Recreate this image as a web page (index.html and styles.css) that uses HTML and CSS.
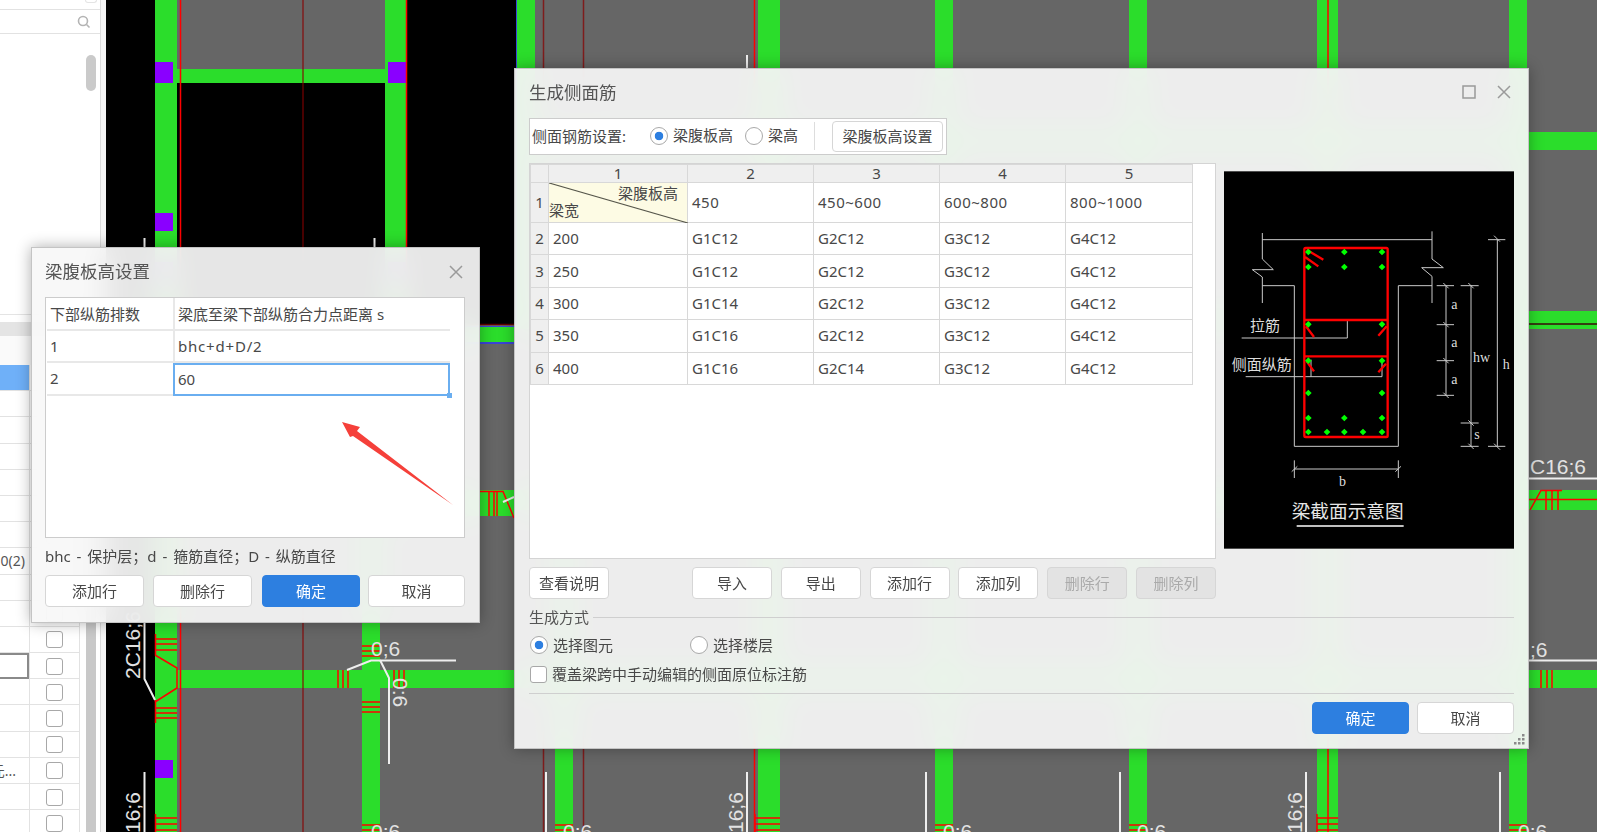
FILE: index.html
```html
<!DOCTYPE html>
<html lang="zh-CN">
<head>
<meta charset="utf-8">
<title>生成侧面筋</title>
<link rel="stylesheet" href="styles.css">
</head>
<body>
<div class="desktop">

  <svg class="cad" width="1597" height="832" viewBox="0 0 1597 832">
    <rect class="gray" x="0" y="0" width="1597" height="832"/>
    <rect class="black" x="106" y="0" width="49" height="832"/>
    <rect class="black" x="177" y="83" width="208" height="242"/>
    <rect class="black" x="406" y="0" width="110" height="325"/>

    <rect class="green" x="155" y="0" width="22" height="832"/>
    <rect class="green" x="385" y="0" width="21" height="325"/>
    <rect class="green" x="177" y="69" width="208" height="14"/>
    <rect class="green" x="362" y="325" width="18" height="507"/>
    <rect class="green" x="517" y="0" width="18" height="325"/>
    <rect class="green" x="555" y="325" width="18" height="507"/>
    <rect class="green" x="758" y="0" width="22" height="832"/>
    <rect class="green" x="935" y="0" width="18" height="832"/>
    <rect class="green" x="1129" y="0" width="18" height="832"/>
    <rect class="green" x="1317" y="0" width="21" height="832"/>
    <rect class="green" x="1509" y="0" width="18" height="832"/>
    <rect class="green" x="516" y="132" width="1081" height="18"/>
    <rect class="green" x="177" y="327" width="339" height="15"/>
    <rect class="green" x="516" y="311" width="1081" height="18"/>
    <rect class="green" x="380" y="490" width="136" height="26"/>
    <rect class="green" x="516" y="490" width="1081" height="20"/>
    <rect class="green" x="177" y="670" width="1420" height="18"/>

    <rect class="blue" x="177" y="326" width="339" height="1"/>
    <rect class="blue" x="177" y="342" width="339" height="2"/>
    <rect class="blue" x="516" y="0" width="1" height="325"/>

    <rect class="purple" x="155" y="62" width="18" height="21"/>
    <rect class="purple" x="388" y="62" width="18" height="21"/>
    <rect class="purple" x="155" y="213" width="18" height="18"/>
    <rect class="purple" x="155" y="262" width="18" height="18"/>
    <rect class="purple" x="388" y="262" width="18" height="18"/>
    <rect class="purple" x="155" y="760" width="18" height="18"/>

    <g class="dark-red">
      <line x1="303" y1="0" x2="303" y2="832"/>
      <line x1="543.500" y1="0" x2="543.500" y2="832"/>
      <line x1="583.500" y1="0" x2="583.500" y2="832"/>
      <line x1="177" y1="324.500" x2="516" y2="324.500"/>
      <line class="dark-line" x1="1529" y1="324" x2="1597" y2="324"/>
    </g>
    <g class="red">
      <line x1="180.500" y1="0" x2="180.500" y2="832"/>
      <line x1="406.500" y1="0" x2="406.500" y2="325"/>
      <line x1="754.500" y1="0" x2="754.500" y2="832"/>
      <line x1="1328" y1="0" x2="1328" y2="832"/>
      <path d="M155.500 634V655M155 639H177M155 644H177M155 650H177"/>
      <path d="M155 655L177 668V688L155 702"/>
      <path d="M155.500 700V723M155 708H177M155 713H177M155 718H177"/>
      <path d="M155.500 814V832M155 818H177M155 824H177M155 830H177"/>
      <path d="M338 670V688M343 670V688M348 670V688"/>
      <path d="M394 670V688M399 670V688M404 670V688"/>
      <path d="M362 646H380M362 651H380M362 656H380"/>
      <path d="M362 702H380M362 707H380M362 712H380"/>
      <path d="M362 825H380M362 830H380"/>
      <path d="M555 825H573M555 830H573M935 825H953M935 830H953M1129 825H1147M1129 830H1147M1509 825H1527M1509 830H1527"/>
      <path d="M755 814V832M755 818H780M755 824H780M755 830H780"/>
      <path d="M1317 814V832M1317 818H1338M1317 824H1338M1317 830H1338"/>
      <path d="M480 491.500H503L514 518M489 491V516M494 491V516M497 491V516"/>
      <path d="M1530 510L1541 490.500H1562M1546 490V510M1552 490V510M1558 490V510M1529 499.500H1597"/>
      <path d="M1541 670V688M1547 670V688M1552 670V688"/>
    </g>
    <g class="leader">
      <line x1="144.500" y1="238" x2="144.500" y2="248"/>
      <line x1="374.500" y1="238" x2="374.500" y2="248"/>
      <line x1="747" y1="55" x2="747" y2="68"/>
      <path d="M144.500 622V679L155 700"/>
      <path d="M144.500 772V832"/>
      <path d="M347 670L371 660.500H456"/>
      <path d="M380 660L389 678V764"/>
      <path d="M546 772V832M747 772V832M926 772V832M1120 772V832M1306 772V832M1500 772V832"/>
      <path d="M1529 478.500H1597M1529 660.500H1597"/>
      <path d="M503 502L514 497"/>
    </g>
    <g class="cad-text">
      <text x="371" y="656">0;6</text>
      <text x="371" y="839">0:6</text>
      <text x="563" y="839">0:6</text>
      <text x="943" y="839">0:6</text>
      <text x="1137" y="839">0:6</text>
      <text x="1518" y="839">0:6</text>
      <text x="1530" y="474">C16;6</text>
      <text x="1530" y="657">;6</text>
      <text transform="translate(140 679) rotate(-90)">2C16;6</text>
      <text transform="translate(140 833) rotate(-90)">16;6</text>
      <text transform="translate(743 833) rotate(-90)">16;6</text>
      <text transform="translate(1302 833) rotate(-90)">16;6</text>
      <text transform="translate(541 872) rotate(-90)">16;6</text>
      <text transform="translate(921 872) rotate(-90)">16;6</text>
      <text transform="translate(1115 872) rotate(-90)">16;6</text>
      <text transform="translate(393 678) rotate(90)">0:6</text>
    </g>
  </svg>

  <aside class="sidebar">
    <div class="side-top"><span class="side-top-box"></span></div>
    <div class="side-search">
      <svg class="search-icon" width="14" height="14" viewBox="0 0 14 14">
        <circle cx="6" cy="6" r="4.500"/>
        <line x1="9.500" y1="9.500" x2="12.500" y2="12.500"/>
      </svg>
    </div>
    <div class="side-tree"><div class="thumb"></div></div>
    <div class="side-head"></div>
    <div class="side-headrow"></div>
    <div class="side-body">
      <div class="rows">
        <div class="cell cell-active"></div><div class="cell cell-check"><span class="box"></span></div>
        <div class="cell"></div><div class="cell cell-check"><span class="box"></span></div>
        <div class="cell"></div><div class="cell cell-check"><span class="box"></span></div>
        <div class="cell"></div><div class="cell cell-check"><span class="box"></span></div>
        <div class="cell"></div><div class="cell cell-check"><span class="box"></span></div>
        <div class="cell"></div><div class="cell cell-check"><span class="box"></span></div>
        <div class="cell"></div><div class="cell cell-check"><span class="box"></span></div>
        <div class="cell"><span>0(2)</span></div><div class="cell cell-check"><span class="box"></span></div>
        <div class="cell"></div><div class="cell cell-check"><span class="box"></span></div>
        <div class="cell"></div><div class="cell cell-check"><span class="box"></span></div>
        <div class="cell"></div><div class="cell cell-check"><span class="box"></span></div>
        <div class="cell cell-outlined"></div><div class="cell cell-check"><span class="box"></span></div>
        <div class="cell"></div><div class="cell cell-check"><span class="box"></span></div>
        <div class="cell"></div><div class="cell cell-check"><span class="box"></span></div>
        <div class="cell"></div><div class="cell cell-check"><span class="box"></span></div>
        <div class="cell cell-more"><span>元...</span></div><div class="cell cell-check"><span class="box"></span></div>
        <div class="cell"></div><div class="cell cell-check"><span class="box"></span></div>
        <div class="cell"></div><div class="cell cell-check"><span class="box"></span></div>
      </div>
      <div class="track"></div>
    </div>
  </aside>

  <section class="dialog dialog-main">
    <header class="dialog-head">
      <h1 class="dialog-title">生成侧面筋</h1>
      <svg class="win-icon win-max" width="14" height="14" viewBox="0 0 14 14"><rect x="1" y="1" width="12" height="12"/></svg>
      <svg class="win-icon win-close" width="14" height="14" viewBox="0 0 14 14"><path d="M1 1L13 13M13 1L1 13"/></svg>
    </header>

    <div class="toolbar">
      <span class="toolbar-label">侧面钢筋设置:</span>
      <label class="radio-item radio-a"><span class="radio radio-on"></span>梁腹板高</label>
      <label class="radio-item radio-b"><span class="radio"></span>梁高</label>
      <span class="toolbar-sep"></span>
      <button class="btn btn-setting">梁腹板高设置</button>
    </div>

    <div class="main-body">
      <div class="sheet">
        <table class="grid">
          <colgroup><col class="c0"><col class="c1"><col class="c2"><col class="c3"><col class="c4"><col class="c5"></colgroup>
          <tr class="row-head"><th></th><th>1</th><th>2</th><th>3</th><th>4</th><th>5</th></tr>
          <tr class="row-first">
            <th>1</th>
            <td class="diag">
              <svg class="diag-line" width="139" height="40" viewBox="0 0 139 40"><line x1="0" y1="0" x2="139" y2="40"/></svg>
              <span class="diag-top">梁腹板高</span><span class="diag-bottom">梁宽</span>
            </td>
            <td>450</td><td>450~600</td><td>600~800</td><td>800~1000</td>
          </tr>
          <tr><th>2</th><td>200</td><td>G1C12</td><td>G2C12</td><td>G3C12</td><td>G4C12</td></tr>
          <tr><th>3</th><td>250</td><td>G1C12</td><td>G2C12</td><td>G3C12</td><td>G4C12</td></tr>
          <tr><th>4</th><td>300</td><td>G1C14</td><td>G2C12</td><td>G3C12</td><td>G4C12</td></tr>
          <tr><th>5</th><td>350</td><td>G1C16</td><td>G2C12</td><td>G3C12</td><td>G4C12</td></tr>
          <tr><th>6</th><td>400</td><td>G1C16</td><td>G2C14</td><td>G3C12</td><td>G4C12</td></tr>
        </table>
      </div>

      <svg class="section-pic" width="290" height="378" viewBox="42 35 870 1132">
        <rect x="42" y="35" width="870" height="1132" fill="#000"/>
        <g class="pic-line">
          <path d="M157 240H666"/>
          <path d="M157 220V298L190 330H127L157 352V430"/>
          <path d="M666 215V298L700 324H635L666 350V430"/>
          <path d="M157 378H253V860H565V378H666"/>
          <path d="M95 535H412V481"/>
          <path d="M107 651H516V603M303 651V600"/>
          <path d="M708 378V707M680 378H732M680 495H732M680 603H732M680 707H732"/>
          <path d="M783 378V860M752 378H806M752 790H806M752 860H806"/>
          <path d="M862 240V860M834 240H886M834 860H886"/>
          <path d="M253 928H565M253 902V955M565 902V955"/>
          <path d="M700 370L716 386M700 487L716 503M700 595L716 611M700 699L716 715M775 370L791 386M775 782L791 798M775 852L791 868M852 228L870 246M852 852L870 870M245 936L262 920M556 936L573 920"/>
        </g>
        <g class="pic-red">
          <rect x="283" y="265" width="250" height="567" rx="4"/>
          <path d="M283 481H533M283 590H533"/>
          <path d="M290 270L340 300M285 292L325 320M288 500L312 532M530 500L505 528M290 605L312 635M528 612L505 638"/>
        </g>
        <path class="pic-dots" d="M295 267l10 10-10 10-10-10zM403 267l10 10-10 10-10-10zM516 267l10 10-10 10-10-10zM295 312l10 10-10 10-10-10zM403 312l10 10-10 10-10-10zM516 312l10 10-10 10-10-10zM295 484l10 10-10 10-10-10zM516 484l10 10-10 10-10-10zM295 593l10 10-10 10-10-10zM516 593l10 10-10 10-10-10zM295 690l10 10-10 10-10-10zM516 690l10 10-10 10-10-10zM295 765l10 10-10 10-10-10zM403 765l10 10-10 10-10-10zM516 765l10 10-10 10-10-10zM295 807l10 10-10 10-10-10zM351 807l10 10-10 10-10-10zM403 807l10 10-10 10-10-10zM459 807l10 10-10 10-10-10zM516 807l10 10-10 10-10-10z"/>
        <g class="pic-cjk">
          <text x="120" y="514">拉筋</text>
          <text x="65" y="632">侧面纵筋</text>
          <text class="pic-title" x="245" y="1076">梁截面示意图</text>
        </g>
        <path class="pic-under" d="M260 1099H581"/>
        <g class="pic-serif">
          <text x="724" y="447">a</text>
          <text x="724" y="563">a</text>
          <text x="724" y="672">a</text>
          <text x="789" y="607">hw</text>
          <text x="793" y="837">s</text>
          <text x="878" y="628">h</text>
          <text x="387" y="979">b</text>
        </g>
      </svg>
    </div>

    <div class="main-actions">
      <button class="btn btn-help">查看说明</button>
      <button class="btn btn-act">导入</button>
      <button class="btn btn-act">导出</button>
      <button class="btn btn-act">添加行</button>
      <button class="btn btn-act">添加列</button>
      <button class="btn btn-act btn-disabled">删除行</button>
      <button class="btn btn-act btn-disabled">删除列</button>
    </div>

    <div class="group-title"><span>生成方式</span><i class="group-line"></i></div>

    <div class="mode-row">
      <label class="radio-item mode-a"><span class="radio radio-on"></span>选择图元</label>
      <label class="radio-item"><span class="radio"></span>选择楼层</label>
    </div>

    <label class="check-row"><span class="box box-main"></span>覆盖梁跨中手动编辑的侧面原位标注筋</label>

    <div class="main-footer">
      <button class="btn btn-primary btn-foot">确定</button>
      <button class="btn btn-foot">取消</button>
    </div>

    <svg class="grip" width="11" height="11" viewBox="0 0 11 11">
      <rect x="8" y="0" width="2.500" height="2.500"/>
      <rect x="4" y="4" width="2.500" height="2.500"/><rect x="8" y="4" width="2.500" height="2.500"/>
      <rect x="0" y="8" width="2.500" height="2.500"/><rect x="4" y="8" width="2.500" height="2.500"/><rect x="8" y="8" width="2.500" height="2.500"/>
    </svg>
  </section>

  <section class="dialog dialog-small">
    <header class="dialog-head">
      <h2 class="dialog-title">梁腹板高设置</h2>
      <svg class="win-icon win-close" width="14" height="14" viewBox="0 0 14 14"><path d="M1 1L13 13M13 1L1 13"/></svg>
    </header>

    <div class="small-table">
      <div class="st-row">
        <div class="st-cell st-left">下部纵筋排数</div>
        <div class="st-cell st-right">梁底至梁下部纵筋合力点距离 s</div>
      </div>
      <div class="st-row">
        <div class="st-cell st-left">1</div>
        <div class="st-cell st-right st-formula">bhc+d+D/2</div>
      </div>
      <div class="st-row">
        <div class="st-cell st-left">2</div>
        <div class="st-cell st-right st-selected">60<i class="st-handle"></i></div>
      </div>
      <svg class="arrow" viewBox="0 0 418 239" width="418" height="239">
        <polygon points="296,124 314,129 311,133 407,207 307,138 304,139"/>
      </svg>
    </div>

    <p class="hint">bhc - 保护层；d - 箍筋直径；D - 纵筋直径</p>

    <div class="small-actions">
      <button class="btn">添加行</button>
      <button class="btn">删除行</button>
      <button class="btn btn-primary">确定</button>
      <button class="btn">取消</button>
    </div>
  </section>
</div>
</body>
</html>
```

FILE: styles.css
```css
* { box-sizing: border-box; }

html, body {
  margin: 0;
  padding: 0;
  background: #666;
}

body {
  font-family: "Noto Sans", "Noto Sans CJK SC", sans-serif;
  font-size: 15px;
  color: #484848;
}

.desktop {
  position: relative;
  width: 1597px;
  height: 832px;
  overflow: hidden;
}

/* CAD canvas */
.cad { position: absolute; left: 0; top: 0; display: block; }
.gray { fill: #666; }
.black { fill: #000; }
.green { fill: #2bdd2b; }
.blue { fill: #3a45d8; }
.purple { fill: #8a00ff; }
.dark-red line { stroke: #880000; stroke-opacity: .72; stroke-width: 1.500; }
.dark-red .dark-line { stroke: #3a0a0a; stroke-opacity: 1; }
.red line, .red path { stroke: #f00; stroke-width: 1.500; fill: none; }
.leader path, .leader line { stroke: #eee; stroke-width: 2; fill: none; }
.cad-text text {
  font-family: "Liberation Sans", sans-serif;
  font-size: 21px;
  fill: #e2e2e2;
}

/* Left side panel */
.sidebar {
  position: absolute;
  left: 0;
  top: 0;
  width: 101px;
  height: 832px;
  background: #fff;
  border-right: 1px solid #dcdcdc;
  box-shadow: 5px 0 0 #f6f6f6;
  display: flex;
  flex-direction: column;
}
.side-top { height: 10px; border-bottom: 1px solid #e2e2e2; flex: none; padding-left: 85px; }
.side-top-box {
  display: block;
  width: 12px;
  height: 3px;
  border: 1px solid #e4e4e4;
  border-top: 0;
  border-radius: 0 0 3px 3px;
}
.side-search {
  height: 24px;
  flex: none;
  border-bottom: 1px solid #e2e2e2;
  display: flex;
  align-items: center;
  justify-content: flex-end;
  padding-right: 9px;
}
.search-icon circle, .search-icon line { fill: none; stroke: #b4b4b4; stroke-width: 1.600; }
.side-tree { height: 281px; flex: none; border-bottom: 1px solid #e4e4e4; }
.thumb {
  width: 10px;
  height: 36px;
  margin: 21px 0 0 86px;
  border-radius: 5px;
  background: #cacaca;
}
.side-head { height: 14px; flex: none; margin-top: 7px; background: #e4e4e4; }
.side-headrow { height: 29px; flex: none; background: #fafafa; }
.side-body { display: flex; gap: 6px; flex: 1; min-height: 0; }
.rows {
  width: 80px;
  display: grid;
  grid-template-columns: 29px 51px;
  grid-auto-rows: 26.200px;
  border-right: 1px solid #e2e2e2;
  flex: none;
}
.cell {
  border-bottom: 1px solid #e2e2e2;
  display: flex;
  align-items: center;
  justify-content: flex-end;
  padding-right: 4px;
  overflow: hidden;
  white-space: nowrap;
  font-size: 14px;
  color: #555;
}
.cell-active { background: #6fb0f8; }
.cell-outlined { border: 2px solid #8a8a8a; border-left: 0; }
.cell-more { padding-right: 13px; }
.cell-check { justify-content: center; padding: 1px 1px 0 0; border-left: 1px solid #e2e2e2; }
.box {
  display: block;
  width: 17px;
  height: 17px;
  background: #fff;
  border: 1.500px solid #a8a8a8;
  border-radius: 3px;
}
.track { width: 10px; background: #c8c8c8; flex: none; }

/* Dialogs */
.dialog {
  position: absolute;
  display: flex;
  flex-direction: column;
  background: rgba(247, 247, 247, .93);
  -webkit-backdrop-filter: blur(14px);
  backdrop-filter: blur(14px);
  border: 1px solid #c4c4c4;
  box-shadow: 0 0 14px rgba(0, 0, 0, .32);
}
.dialog-main { left: 514px; top: 68px; width: 1015px; height: 681px; padding: 0 14px; }
.dialog-small { left: 31px; top: 247px; width: 449px; height: 376px; padding: 0 14px 0 13px; }

.dialog-head {
  height: 49px;
  flex: none;
  display: flex;
  align-items: center;
  padding-bottom: 4px;
}
.dialog-title {
  margin: 0;
  font-size: 17.500px;
  font-weight: 400;
  color: #555;
  flex: 1;
}
.win-icon { flex: none; fill: none; stroke: #9a9a9a; stroke-width: 1.500; }
.dialog-main .win-close { margin-left: 20px; margin-right: 3px; }
.dialog-main .win-max { margin-right: 1px; }
.dialog-small .dialog-head { padding-bottom: 2px; }
.dialog-small .dialog-title { padding-bottom: 2px; }
.dialog-small .win-close { margin-right: 2px; }

/* Buttons */
.btn {
  font: inherit;
  color: #484848;
  height: 32px;
  padding: 0 0 2px;
  background: #fff;
  border: 1px solid #d6d6d6;
  border-radius: 4px;
}
.btn-primary { background: #2d7fe0; border-color: #2d7fe0; color: #fff; }
.btn-disabled { background: #e3e3e3; color: #aaa; }

/* Toolbar */
.toolbar {
  height: 37px;
  width: 418px;
  flex: none;
  display: flex;
  align-items: center;
  background: #fff;
  border: 1px solid #ccc;
  padding: 0 0 2px 2px;
}
.toolbar-label { width: 118px; flex: none; }
.radio-item { display: flex; align-items: center; gap: 5px; white-space: nowrap; padding-bottom: 2px; }
.radio {
  display: block;
  width: 18px;
  height: 18px;
  flex: none;
  margin-bottom: -2px;
  background: #fff;
  border: 1px solid #a9a9a9;
  border-radius: 50%;
}
.radio-on {
  background: radial-gradient(circle, #2d7fe0 0 4px, #fff 4.600px);
}
.radio-a { width: 95px; flex: none; }
.radio-b { width: 69px; flex: none; }
.toolbar-sep { width: 1px; height: 28px; background: #ddd; flex: none; margin-right: 17px; }
.btn-setting { width: 111px; height: 31px; flex: none; margin-bottom: -2px; }

/* Main body */
.main-body { display: flex; gap: 8px; margin-top: 8px; height: 396px; flex: none; }
.sheet {
  width: 687px;
  height: 396px;
  flex: none;
  background: #fff;
  border: 1px solid #d4d4d4;
}
.grid {
  border-collapse: collapse;
  table-layout: fixed;
  width: 662px;
}
.grid th, .grid td {
  border: 1px solid #d8d8d8;
  padding: 0;
  height: 32.400px;
  font-weight: 400;
  line-height: 1;
}
.grid td { padding-left: 4px; }
.grid th { background: #efefef; text-align: center; }
.c0 { width: 18px; }
.c1 { width: 139px; }
.c2 { width: 126px; }
.c3 { width: 126px; }
.c4 { width: 126px; }
.c5 { width: 127px; }
.row-head th { height: 18px; }
.row-first th, .row-first td { height: 40px; }
.row-first td { letter-spacing: .5px; }
.grid td.diag {
  position: relative;
  padding: 0;
  letter-spacing: 0;
  background: #fdfbe4;
}
.diag-line { position: absolute; left: 0; top: 0; display: block; }
.diag-line line { stroke: #55554a; stroke-width: 1.200; }
.diag-top { position: absolute; right: 9px; top: 3px; }
.diag-bottom { position: absolute; left: 0; bottom: 4px; }

.section-pic { display: block; flex: none; margin-top: 8px; }
.pic-line path { fill: none; stroke: #c9c9c9; stroke-width: 3; }
.pic-red rect, .pic-red path { fill: none; stroke: #f00; stroke-width: 7; }
.pic-dots { fill: #0f0; }
.pic-cjk text { font-size: 45px; fill: #ddd; }
.pic-cjk .pic-title { font-size: 56px; fill: #e6e6e6; }
.pic-under { fill: none; stroke: #fff; stroke-width: 5; }
.pic-serif text { font-family: "Liberation Serif", serif; font-size: 42px; fill: #ddd; }

.main-actions { display: flex; gap: 8.800px; margin-top: 8px; flex: none; }
.btn-help { width: 80px; margin-right: 74.200px; }
.btn-act { width: 80px; }

.group-title {
  height: 20px;
  flex: none;
  margin-top: 8px;
  display: flex;
  align-items: center;
  gap: 4px;
  color: #555;
}
.group-title span { padding-bottom: 2px; }
.group-line { flex: 1; height: 1px; background: #cfcfcf; }

.mode-row { display: flex; align-items: center; height: 18px; margin-top: 9px; padding-left: 1px; flex: none; }
.mode-a { width: 160px; flex: none; }

.check-row { display: flex; align-items: center; gap: 5px; height: 18px; margin-top: 11px; padding: 0 0 2px 1px; flex: none; }
.box-main { width: 17px; height: 17px; margin-bottom: -2px; }

.main-footer {
  border-top: 1px solid #cfcfcf;
  margin-top: 10px;
  padding-top: 8px;
  display: flex;
  justify-content: flex-end;
  gap: 8px;
  flex: none;
}
.btn-foot { width: 97px; }
.grip { position: absolute; right: 3px; bottom: 3px; fill: #8a8a8a; }

/* Small dialog table */
.small-table {
  position: relative;
  height: 241px;
  width: 420px;
  flex: none;
  background: #fff;
  border: 1px solid #ccc;
  padding-left: 1px;
}
.st-row {
  display: flex;
  width: 403px;
  height: 32.500px;
  border-bottom: 2px solid #e8e8e8;
}
.st-cell { display: flex; align-items: center; padding-left: 3px; white-space: nowrap; }
.st-left { width: 128px; flex: none; border-right: 2px solid #e8e8e8; }
.st-right { flex: 1; }
.st-formula { letter-spacing: .8px; }
.st-selected {
  position: relative;
  margin-left: -2px;
  margin-bottom: -2px;
  padding-left: 3px;
  border: 2px solid #6aaef0;
}
.st-handle {
  position: absolute;
  right: -4px;
  bottom: -4px;
  width: 5px;
  height: 5px;
  background: #6aaef0;
}
.arrow { position: absolute; left: 0; top: 0; }
.arrow polygon { fill: #f5403a; }

.hint { margin: 0; height: 37px; flex: none; display: flex; align-items: center; white-space: pre; word-spacing: 2px; padding-bottom: 3px; }

.small-actions { display: flex; flex: none; width: 420px; }
.small-actions .btn { flex: none; width: 99px; margin-right: 9px; }
.small-actions .btn:nth-child(2) { margin-right: 10px; }
.small-actions .btn:nth-child(3) { width: 98px; margin-right: 8px; }
.small-actions .btn:nth-child(4) { width: 97px; margin-right: 0; }
```
